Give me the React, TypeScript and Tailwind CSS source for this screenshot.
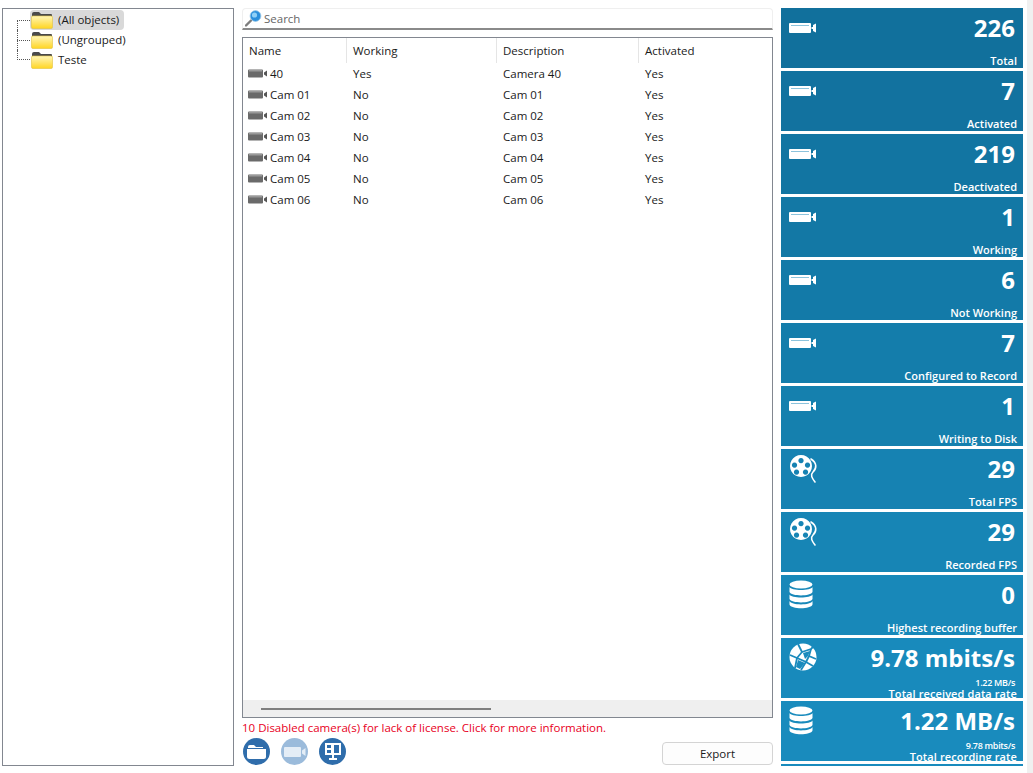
const font = 'font-["Open_Sans","Noto_Sans",sans-serif]';

function Folder() {
  return (
    <svg width="22" height="18" viewBox="0 0 22 18" className="shrink-0">
      <path d="M1 3 Q1 1 3 1 H8 L10 3 H20 Q21 3 21 4 V8 H1 Z" fill="#4a4a4a" />
      <path d="M0.5 6 Q0.5 5 2 5 H20 Q21.5 5 21.5 6 V16 Q21.5 17.5 20 17.5 H2 Q0.5 17.5 0.5 16 Z" fill="url(#fold)" stroke="#e3c23f" strokeWidth="0.6" />
      <defs>
        <linearGradient id="fold" x1="0" y1="0" x2="0" y2="1">
          <stop offset="0" stopColor="#fff6b8" />
          <stop offset="1" stopColor="#ffd522" />
        </linearGradient>
      </defs>
    </svg>
  );
}

function SmallCam() {
  return (
    <svg width="20" height="9" viewBox="0 0 20 9" className="shrink-0">
      <rect x="0" y="0.5" width="15" height="8" rx="1" fill="#6a6a6a" />
      <rect x="1" y="1" width="13" height="1.5" fill="#9a9a9a" />
      <path d="M16 3.5 L19 1.5 V7.5 L16 5.5 Z" fill="#555" />
    </svg>
  );
}

function CamIcon() {
  return (
    <svg width="28" height="12" viewBox="0 0 28 12">
      <path d="M1 1 H21 Q22 1 22 2 V10 Q22 11 21 11 H1 Q0 11 0 10 V2 Q0 1 1 1 Z" fill="#fff" />
      <rect x="2" y="3" width="18" height="1" fill="#8cc3dc" />
      <path d="M22.5 5 L24 5 V3 L27 1.5 V10.5 L24 9 V7 L22.5 7 Z" fill="#fff" />
    </svg>
  );
}

function ReelIcon() {
  return (
    <svg width="30" height="32" viewBox="0 0 30 32">
      <path
        fillRule="evenodd"
        fill="#fff"
        d="M12 1 A11 11 0 1 1 11.99 1 Z M12 4 A2.6 2.6 0 1 0 12.01 4 Z M5.5 8.5 A2.6 2.6 0 1 0 5.51 8.5 Z M18.5 8.5 A2.6 2.6 0 1 0 18.51 8.5 Z M7.5 15.5 A2.6 2.6 0 1 0 7.51 15.5 Z M16.5 15.5 A2.6 2.6 0 1 0 16.51 15.5 Z"
      />
      <path d="M22 5 C28 9 28 14 24 18 C21 21 23 24 26 28" fill="none" stroke="#fff" strokeWidth="1.6" strokeLinecap="round" />
    </svg>
  );
}

function DbIcon() {
  return (
    <svg width="24" height="29" viewBox="0 0 24 29" fill="#fff">
      <ellipse cx="12" cy="4.5" rx="11.5" ry="4" />
      <path d="M0.5 7 C2 11 22 11 23.5 7 V12 C22 16.5 2 16.5 0.5 12 Z" />
      <path d="M0.5 14.5 C2 18.5 22 18.5 23.5 14.5 V19 C22 23.5 2 23.5 0.5 19 Z" />
      <path d="M0.5 21 C2 25.5 22 25.5 23.5 21 V24.5 C22 29.5 2 29.5 0.5 24.5 Z" />
    </svg>
  );
}

function GlobeIcon() {
  return (
    <svg width="28" height="28" viewBox="0 0 28 28">
      <circle cx="14" cy="14" r="13.5" fill="#fff" />
      <g stroke="#1a8abd" strokeWidth="1.8" fill="none">
        <path d="M9 1 L13 9 L8 15 L1 12" />
        <path d="M13 9 L22 6 L25 3" />
        <path d="M8 15 L6 25" />
        <path d="M8 15 L17 19 L12 27" />
        <path d="M22 6 L20 13 L27 16" />
        <path d="M17 19 L20 13" />
        <path d="M17 19 L24 23" />
      </g>
      <path d="M9 17 L16 20 L11 26 L7 24 Z" fill="#1a8abd" />
      <path d="M14 10 L21 8 L19 13 L16 16 Z" fill="#1a8abd" />
    </svg>
  );
}

function SearchIcon() {
  return (
    <svg width="17" height="17" viewBox="0 0 17 17" className="shrink-0">
      <path d="M1 15.5 L6 10.5" stroke="#7d7d7d" strokeWidth="2.4" strokeLinecap="round" />
      <circle cx="10.5" cy="6" r="5.4" fill="#2a8fdc" stroke="#9cc8e6" strokeWidth="0.8" />
      <circle cx="9.5" cy="5" r="2.6" fill="#8fd0f7" />
    </svg>
  );
}

function RoundButton({ faded, children }: { faded?: boolean; children: React.ReactNode }) {
  return (
    <div className={`flex h-[27px] w-[27px] items-center justify-center rounded-full ${faded ? "bg-[#9bbbdb]" : "bg-[#2f6dab]"}`}>
      {children}
    </div>
  );
}

const tree = ["(All objects)", "(Ungrouped)", "Teste"];

const rows = [
  ["40", "Yes", "Camera 40", "Yes"],
  ["Cam 01", "No", "Cam 01", "Yes"],
  ["Cam 02", "No", "Cam 02", "Yes"],
  ["Cam 03", "No", "Cam 03", "Yes"],
  ["Cam 04", "No", "Cam 04", "Yes"],
  ["Cam 05", "No", "Cam 05", "Yes"],
  ["Cam 06", "No", "Cam 06", "Yes"],
];

const cards = [
  { value: "226", label: "Total", icon: "cam", bg: "bg-[#11709c]" },
  { value: "7", label: "Activated", icon: "cam", bg: "bg-[#12729f]" },
  { value: "219", label: "Deactivated", icon: "cam", bg: "bg-[#1275a2]" },
  { value: "1", label: "Working", icon: "cam", bg: "bg-[#1378a5]" },
  { value: "6", label: "Not Working", icon: "cam", bg: "bg-[#137aa8]" },
  { value: "7", label: "Configured to Record", icon: "cam", bg: "bg-[#147dab]" },
  { value: "1", label: "Writing to Disk", icon: "cam", bg: "bg-[#1580ae]" },
  { value: "29", label: "Total FPS", icon: "reel", bg: "bg-[#1682b2]" },
  { value: "29", label: "Recorded FPS", icon: "reel", bg: "bg-[#1785b5]" },
  { value: "0", label: "Highest recording buffer", icon: "db", bg: "bg-[#1888b9]" },
  { value: "9.78 mbits/s", sub: "1.22 MB/s", label: "Total received data rate", icon: "globe", bg: "bg-[#188abc]" },
  { value: "1.22 MB/s", sub: "9.78 mbits/s", label: "Total recording rate", icon: "db", bg: "bg-[#198bbd]" },
];

function CardIcon({ kind }: { kind: string }) {
  if (kind === "reel") return <ReelIcon />;
  if (kind === "db") return <DbIcon />;
  if (kind === "globe") return <GlobeIcon />;
  return <CamIcon />;
}

function Card({ card }: { card: (typeof cards)[number] }) {
  return (
    <div className={`flex h-[60px] w-[242px] shrink-0 justify-between pl-2 pr-[6px] text-white ${card.bg}`}>
      <div className={card.icon === "cam" ? "pt-[14px]" : "pt-[5px]"}>
        <CardIcon kind={card.icon} />
      </div>
      <div className="flex flex-col items-end">
        <div className="mr-[2px] mt-[3px] text-[24px] leading-[33px] font-bold">{card.value}</div>
        {card.sub && <div className="mr-[2px] mt-[4px] text-[9px] leading-[9px] font-semibold tracking-[-0.3px]">{card.sub}</div>}
        <div className={`mt-auto mb-[1px] text-[11px] leading-[13px] font-semibold ${card.sub ? "tracking-[0.1px]" : ""}`}>{card.label}</div>
      </div>
    </div>
  );
}

export default function App() {
  return (
    <div className={`flex h-[773px] w-[1033px] overflow-hidden bg-white pt-2 text-[11.5px] text-[#1a1a1a] ${font}`}>
      {/* tree */}
      <div className="ml-[2px] h-[758px] w-[232px] shrink-0 border border-[#828790] pt-[1px] pl-[14px]">
        {tree.map((name, i) => (
          <div key={name} className="flex h-5 items-center">
            <div className="flex h-5 w-[13px] shrink-0 flex-col">
              <div className={`h-[10px] ${i > 0 ? "border-l border-dotted border-[#555]" : ""} ${i === 2 ? "border-b" : ""}`} />
              <div className={`h-[10px] ${i < 2 ? "border-l border-dotted border-[#555]" : ""} ${i < 2 ? "border-t" : ""}`} />
            </div>
            <div className={`flex h-5 items-center gap-[5px] rounded-sm pl-[1px] pr-[5px] ${i === 0 ? "bg-[#d9d9d9]" : ""}`}>
              <Folder />
              <span>{name}</span>
            </div>
          </div>
        ))}
      </div>

      {/* middle */}
      <div className="ml-2 flex w-[531px] shrink-0 flex-col">
        <div className="flex h-[22px] items-center gap-[2px] rounded-t-sm border border-b-2 border-[#efefef] border-b-[#8a8a8a] pl-[2px] text-[#666]">
          <SearchIcon />
          <span>Search</span>
        </div>
        <div className="mt-[7px] flex h-[681px] flex-col border border-[#828790]">
          <div className="grid h-[25px] grid-cols-[104px_150px_142px_1fr] items-center">
            {["Name", "Working", "Description", "Activated"].map((h, i) => (
              <div key={h} className={`flex h-full items-center pl-[6px] ${i < 3 ? "border-r border-[#e5e5e5]" : ""}`}>{h}</div>
            ))}
          </div>
          <div className="flex-1">
            {rows.map((r) => (
              <div key={r[0]} className="grid h-[21px] grid-cols-[104px_150px_142px_1fr] items-center">
                <div className="flex items-center gap-[2px] pl-[5px]">
                  <SmallCam />
                  <span>{r[0]}</span>
                </div>
                <div className="pl-[6px]">{r[1]}</div>
                <div className="pl-[6px]">{r[2]}</div>
                <div className="pl-[6px]">{r[3]}</div>
              </div>
            ))}
          </div>
          <div className="flex h-[17px] items-center bg-[#efefef] pl-[18px]">
            <div className="h-[2px] w-[230px] bg-[#7f7f7f]" />
          </div>
        </div>
        <div className="mt-[1px] h-[16px] text-[#e8001c]">10 Disabled camera(s) for lack of license. Click for more information.</div>
        <div className="mt-[3px] flex items-center justify-between">
          <div className="flex gap-[11px] pl-[1px]">
            <RoundButton>
              <svg width="19" height="15" viewBox="0 0 19 15" fill="#fff">
                <path d="M1 3 Q1 1 3 1 H7 L9 3 H16 V4 H1 Z" />
                <path d="M0 5 H19 V12.5 Q19 15 16.5 15 H2.5 Q0 15 0 12.5 Z" />
              </svg>
            </RoundButton>
            <RoundButton faded>
              <svg width="22" height="10" viewBox="0 0 22 10" fill="#e4edf6">
                <rect x="0" y="0" width="17" height="10" rx="1" />
                <path d="M18 3.5 L21.5 1 V9 L18 6.5 Z" />
              </svg>
            </RoundButton>
            <RoundButton>
              <svg width="18" height="19" viewBox="0 0 18 19" fill="#fff">
                <path fillRule="evenodd" d="M1 1 H17 V13 H1 Z M3 3 V6 H7 V3 Z M3 8 V11 H7 V8 Z M10 3 V11 H15 V3 Z" />
                <path d="M8 13 H10 V16 H13 V18 H5 V16 H8 Z" />
              </svg>
            </RoundButton>
          </div>
          <div className="mt-[4px] flex h-[23px] w-[111px] items-center justify-center rounded-[4px] border border-[#d4d4d4] bg-[#fdfdfd]">Export</div>
        </div>
      </div>

      {/* stat cards */}
      <div className="ml-2 flex w-[242px] shrink-0 flex-col gap-[3px]">
        {cards.map((c) => (
          <Card key={c.label} card={c} />
        ))}
        <div className="h-[2px] w-[242px] shrink-0 bg-[#198bbd]" />
      </div>

      <div className="ml-1 w-[6px] shrink-0 -mt-2 bg-[#f0f0f0]" />
    </div>
  );
}
